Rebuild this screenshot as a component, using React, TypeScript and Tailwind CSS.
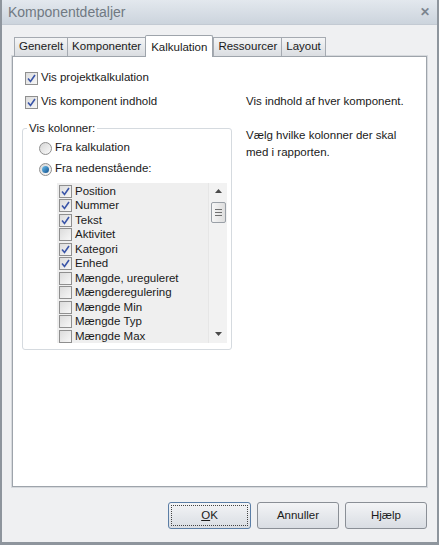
import {ReactNode} from "react";

type Col = {label: string, checked: boolean};

const columns: Col[] = [
    {label: "Position", checked: true},
    {label: "Nummer", checked: true},
    {label: "Tekst", checked: true},
    {label: "Aktivitet", checked: false},
    {label: "Kategori", checked: true},
    {label: "Enhed", checked: true},
    {label: "Mængde, ureguleret", checked: false},
    {label: "Mængderegulering", checked: false},
    {label: "Mængde Min", checked: false},
    {label: "Mængde Typ", checked: false},
    {label: "Mængde Max", checked: false},
];

const tabs = ["Generelt", "Komponenter", "Kalkulation", "Ressourcer", "Layout"];

// little checkbox with the vista-ish check mark
const CheckBox = ({checked}: {checked: boolean}) => (
    <span className="w-[13px] h-[13px] shrink-0 border border-[#8f8f8f] bg-gradient-to-br from-[#dcdcdc] to-[#f7f7f7] flex items-center justify-center">
        {checked && (
            <svg width="9" height="9" viewBox="0 0 9 9">
                <path d="M1 4.5 L3.5 7.5 L8 1" fill="none" stroke="#3a55a8" strokeWidth="1.6"/>
            </svg>
        )}
    </span>
);

const Radio = ({selected}: {selected: boolean}) => (
    <span className="w-[13px] h-[13px] shrink-0 rounded-full border border-[#8f8f8f] bg-gradient-to-br from-[#d6d6d6] to-[#fafafa] flex items-center justify-center">
        {selected && <span className="w-[7px] h-[7px] rounded-full bg-gradient-to-br from-[#6fc3f0] to-[#0d4f8c]"/>}
    </span>
);

const Button = ({children, focused}: {children: ReactNode, focused?: boolean}) => (
    <button
        className={focused
            ? "w-[83px] h-[27px] rounded-[3px] border border-[#5b7ea6] bg-gradient-to-b from-[#f3f4f6] to-[#d9dde3] p-[2px]"
            : "w-[82px] h-[27px] rounded-[3px] border border-[#8a8f96] bg-gradient-to-b from-[#f3f4f6] to-[#d9dde3]"}
    >
        {focused
            ? <span className="w-full h-full flex items-center justify-center border border-dotted border-[#444]">{children}</span>
            : children}
    </button>
);

export default function App() {
    return (
        <div className="w-[439px] h-[545px] flex flex-col border-x-2 border-b-[3px] border-[#8e959d] bg-[#eff0f2] text-[11.5px] text-[#1a1a1a]"
             style={{fontFamily: '"Liberation Sans", Arial, sans-serif'}}>
            {/* title bar */}
            <div className="h-[25px] shrink-0 flex items-center justify-between pl-[6px] pr-[7px] bg-gradient-to-b from-[#e3e8ee] to-[#ccd4dd] border-b border-[#c3cad3]">
                <span className="text-[14px] text-[#707982]">Komponentdetaljer</span>
                <span className="text-[12px] font-bold text-[#7c858f]">✕</span>
            </div>

            <div className="flex-1 flex flex-col px-[10px] pt-[9px]">
                {/* tabs */}
                <div className="h-[22px] flex items-end pl-[2px] relative z-10">
                    {tabs.map((t) => t === "Kalkulation" ? (
                        <div key={t} className="h-[22px] px-[5px] -mb-px flex items-start pt-[3px] bg-white border border-b-0 border-[#9ea4ab] rounded-t-[2px]">
                            {t}
                        </div>
                    ) : (
                        <div key={t} className="h-[19px] px-[4px] flex items-center bg-gradient-to-b from-[#f4f5f6] to-[#dadde1] border border-b-0 border-r-0 last:border-r border-[#a5aab1]">
                            {t}
                        </div>
                    ))}
                </div>

                {/* panel */}
                <div className="h-[431px] border border-[#9ea4ab] bg-white outline outline-1 outline-[#d6d9dd] flex flex-col pl-[9px] pt-[14px]">
                    <div className="flex">
                        <div className="w-[224px] flex flex-col">
                            <label className="flex items-center gap-[3px] h-[14px] ml-[3px]">
                                <CheckBox checked/>
                                <span>Vis projektkalkulation</span>
                            </label>
                            <label className="flex items-center gap-[3px] h-[14px] mt-[10px] ml-[3px]">
                                <CheckBox checked/>
                                <span>Vis komponent indhold</span>
                            </label>

                            <div className="mt-[19px] relative border border-[#d5dadf] rounded-[3px] w-[210px] h-[222px] pt-[6px] pl-[16px]">
                                <span className="absolute -top-[8px] left-[4px] bg-white px-[2px] leading-[14px]">Vis kolonner:</span>
                                <div className="flex items-center gap-[3px] h-[14px] mt-[6px]">
                                    <Radio selected={false}/>
                                    <span>Fra kalkulation</span>
                                </div>
                                <div className="flex items-center gap-[3px] h-[14px] mt-[7px]">
                                    <Radio selected/>
                                    <span>Fra nedenstående:</span>
                                </div>

                                <div className="mt-[7px] ml-[18px] w-[170px] h-[160px] bg-[#efefef] flex overflow-hidden">
                                    <div className="flex-1 pl-[2px] pt-[1px] flex flex-col">
                                        {columns.map((c) => (
                                            <div key={c.label} className="h-[14.5px] shrink-0 flex items-center gap-[3px]">
                                                <CheckBox checked={c.checked}/>
                                                <span className="leading-none">{c.label}</span>
                                            </div>
                                        ))}
                                        <div className="h-[14px] shrink-0 flex items-center"><CheckBox checked={false}/></div>
                                    </div>
                                    {/* scrollbar */}
                                    <div className="w-[19px] flex flex-col items-center border-l border-[#e6e6e6] bg-[#f2f2f2]">
                                        <svg width="9" height="18" viewBox="0 0 9 18" className="mt-[1px]">
                                            <path d="M1 9 L4.5 5 L8 9 Z" fill="#4a4a4a"/>
                                        </svg>
                                        <div className="w-[15px] h-[21px] border border-[#9aa0a7] rounded-[2px] bg-gradient-to-r from-[#f6f6f6] to-[#dedede] flex flex-col items-center justify-center gap-[2px]">
                                            <span className="w-[7px] h-px bg-[#707070]"/>
                                            <span className="w-[7px] h-px bg-[#707070]"/>
                                            <span className="w-[7px] h-px bg-[#707070]"/>
                                        </div>
                                        <div className="flex-1"/>
                                        <svg width="9" height="16" viewBox="0 0 9 16" className="mb-[1px]">
                                            <path d="M1 6 L4.5 10 L8 6 Z" fill="#4a4a4a"/>
                                        </svg>
                                    </div>
                                </div>
                            </div>
                        </div>

                        <div className="flex flex-col pt-[22px]">
                            <p>Vis indhold af hver komponent.</p>
                            <p className="mt-[17px] leading-[17px]">Vælg hvilke kolonner der skal<br/>med i rapporten.</p>
                        </div>
                    </div>
                </div>

                {/* buttons */}
                <div className="flex justify-end gap-[6px] mt-[15px]">
                    <Button focused><span><u>O</u>K</span></Button>
                    <Button>Annuller</Button>
                    <Button>Hjælp</Button>
                </div>
            </div>
        </div>
    );
}
